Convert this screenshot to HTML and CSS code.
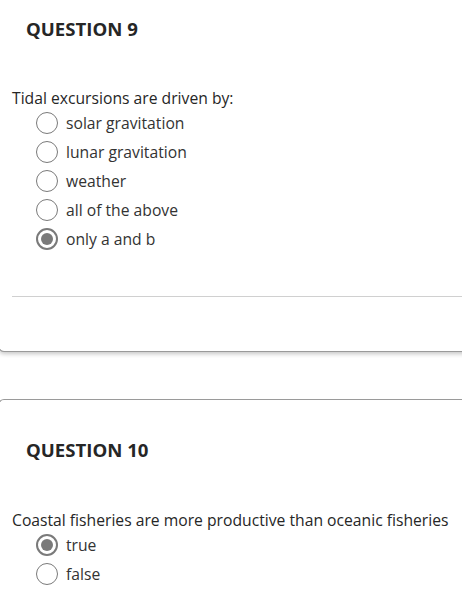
FILE: index.html
```html
<!DOCTYPE html>
<html>
<head>
<meta charset="utf-8">
<link rel="stylesheet" href="styles.css">
</head>
<body>
<div class="page">
  <section class="card card-first">
    <h2 class="q-title">QUESTION 9</h2>
    <p class="q-text">Tidal excursions are driven by:</p>
    <ul class="options">
      <li class="option"><span class="radio"></span><span class="label">solar gravitation</span></li>
      <li class="option"><span class="radio"></span><span class="label">lunar gravitation</span></li>
      <li class="option"><span class="radio"></span><span class="label">weather</span></li>
      <li class="option"><span class="radio"></span><span class="label">all of the above</span></li>
      <li class="option"><span class="radio checked"></span><span class="label">only a and b</span></li>
    </ul>
    <hr class="divider">
  </section>
  <section class="card card-second">
    <h2 class="q-title">QUESTION 10</h2>
    <p class="q-text">Coastal fisheries are more productive than oceanic fisheries</p>
    <ul class="options">
      <li class="option"><span class="radio checked"></span><span class="label">true</span></li>
      <li class="option"><span class="radio"></span><span class="label">false</span></li>
    </ul>
  </section>
</div>
</body>
</html>
```

FILE: styles.css
```css
html, body {
  margin: 0;
  padding: 0;
  background: #ffffff;
  overflow: hidden;
}
body {
  font-family: "Open Sans", "Liberation Sans", sans-serif;
  color: #333333;
  width: 462px;
  height: 612px;
}
.page {
  width: 480px;
  margin-left: -2px;
}
.card {
  background: #fff;
  border: 1px solid #9a9a9a;
  border-right: none;
  border-radius: 6px;
}
.card-first {
  border-top: none;
  border-top-left-radius: 0;
  padding-top: 16px;
  padding-bottom: 54px;
  box-shadow: 0 2px 4px rgba(0, 0, 0, 0.22);
}
.card-second {
  margin-top: 47px;
  border-bottom: none;
  border-bottom-left-radius: 0;
  padding-top: 37px;
  padding-bottom: 40px;
}
.q-title {
  margin: 0 0 0 27px;
  font-size: 18.6px;
  line-height: 26px;
  font-weight: 700;
  color: #262626;
}
.q-text {
  margin: 46px 0 0 13px;
  font-size: 15.7px;
  line-height: 21px;
  color: #262626;
}
.card-second .q-text {
  margin-top: 47px;
}
.options {
  list-style: none;
  margin: 0;
  padding: 0 0 0 37px;
}
.option {
  display: flex;
  align-items: center;
  height: 29px;
  font-size: 15.7px;
  line-height: 29px;
}
.radio {
  box-sizing: border-box;
  width: 22px;
  height: 22px;
  border: 1.5px solid #7a7a7a;
  border-radius: 50%;
  background: #fff;
  margin-right: 8px;
  margin-top: -1px;
  display: flex;
  align-items: center;
  justify-content: center;
}
.radio.checked {
  border: 2px solid #7a7a7a;
}
.radio.checked::after {
  content: "";
  width: 12px;
  height: 12px;
  border-radius: 50%;
  background: #7a7a7a;
}
.label {
  color: #333333;
}
.divider {
  margin: 42px 0 0 13px;
  border: none;
  border-top: 1px solid #d0d0d0;
  height: 0;
}
```
